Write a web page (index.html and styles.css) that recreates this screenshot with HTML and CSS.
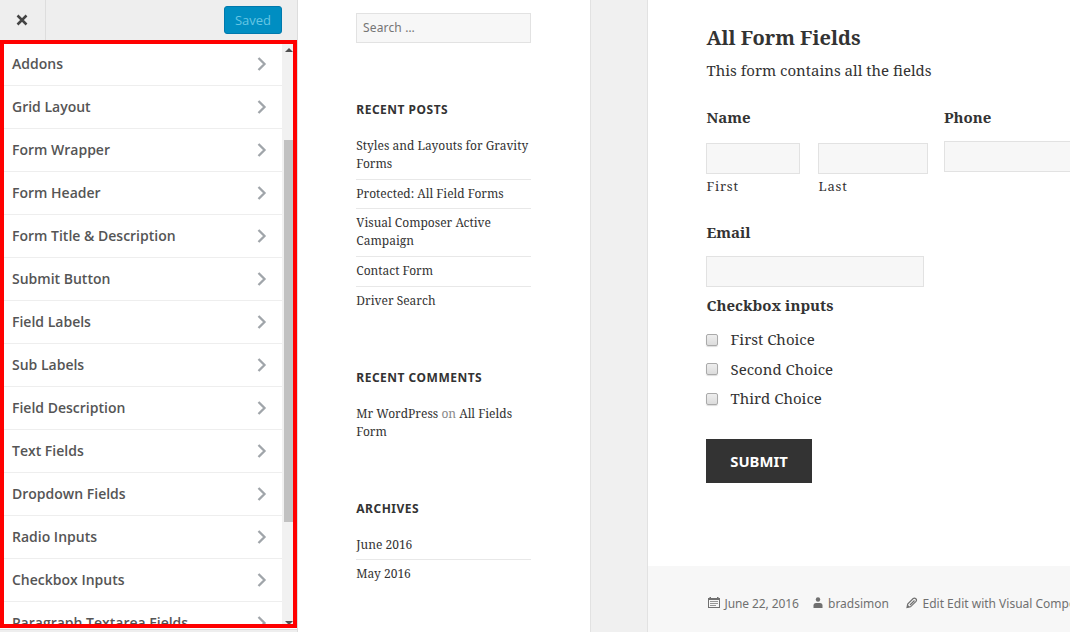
FILE: index.html
```html
<!DOCTYPE html>
<html lang="en">
<head>
<meta charset="utf-8">
<title>Customizer</title>
<link rel="stylesheet" href="styles.css">
</head>
<body>
<div class="app">
  <aside class="customizer">
    <header class="toolbar">
      <button class="close" aria-label="Close"><svg width="12" height="12" viewBox="0 0 12 12"><path d="M1.500 1.500l9 9M10.500 1.500l-9 9" stroke="#444" stroke-width="2.500" fill="none"/></svg></button>
      <button class="saved">Saved</button>
    </header>
    <div class="panel">
      <ul class="sections">
        <li>Addons<svg class="chev" viewBox="0 0 10 14"><path d="M1.500 1l6 6-6 6"/></svg></li>
        <li>Grid Layout<svg class="chev" viewBox="0 0 10 14"><path d="M1.500 1l6 6-6 6"/></svg></li>
        <li>Form Wrapper<svg class="chev" viewBox="0 0 10 14"><path d="M1.500 1l6 6-6 6"/></svg></li>
        <li>Form Header<svg class="chev" viewBox="0 0 10 14"><path d="M1.500 1l6 6-6 6"/></svg></li>
        <li>Form Title &amp; Description<svg class="chev" viewBox="0 0 10 14"><path d="M1.500 1l6 6-6 6"/></svg></li>
        <li>Submit Button<svg class="chev" viewBox="0 0 10 14"><path d="M1.500 1l6 6-6 6"/></svg></li>
        <li>Field Labels<svg class="chev" viewBox="0 0 10 14"><path d="M1.500 1l6 6-6 6"/></svg></li>
        <li>Sub Labels<svg class="chev" viewBox="0 0 10 14"><path d="M1.500 1l6 6-6 6"/></svg></li>
        <li>Field Description<svg class="chev" viewBox="0 0 10 14"><path d="M1.500 1l6 6-6 6"/></svg></li>
        <li>Text Fields<svg class="chev" viewBox="0 0 10 14"><path d="M1.500 1l6 6-6 6"/></svg></li>
        <li>Dropdown Fields<svg class="chev" viewBox="0 0 10 14"><path d="M1.500 1l6 6-6 6"/></svg></li>
        <li>Radio Inputs<svg class="chev" viewBox="0 0 10 14"><path d="M1.500 1l6 6-6 6"/></svg></li>
        <li>Checkbox Inputs<svg class="chev" viewBox="0 0 10 14"><path d="M1.500 1l6 6-6 6"/></svg></li>
        <li>Paragraph Textarea Fields<svg class="chev" viewBox="0 0 10 14"><path d="M1.500 1l6 6-6 6"/></svg></li>
      </ul>
      <div class="scrollbar">
        <svg class="arrow" viewBox="0 0 8 4"><path d="M0 4L4 0l4 4z"/></svg>
        <div class="thumb"></div>
        <svg class="arrow down" viewBox="0 0 8 4"><path d="M0 0l4 4 4-4z"/></svg>
      </div>
    </div>
    <div class="bottom"></div>
  </aside>

  <section class="sidebar">
    <input class="search" type="text" placeholder="Search …">
    <h2 class="widget-title">Recent Posts</h2>
    <ul class="links">
      <li>Styles and Layouts for Gravity<br>Forms</li>
      <li class="tight">Protected: All Field Forms</li>
      <li>Visual Composer Active<br>Campaign</li>
      <li>Contact Form</li>
      <li>Driver Search</li>
    </ul>
    <h2 class="widget-title">Recent Comments</h2>
    <ul class="links">
      <li>Mr WordPress <span class="muted">on</span> All Fields<br>Form</li>
    </ul>
    <h2 class="widget-title">Archives</h2>
    <ul class="links">
      <li class="tight">June 2016</li>
      <li>May 2016</li>
    </ul>
  </section>

  <main class="content">
    <div class="form">
      <h1 class="form-title">All Form Fields</h1>
      <p class="form-desc">This form contains all the fields</p>
      <div class="row">
        <div class="name-field">
          <div class="label">Name</div>
          <div class="name-inputs">
            <div class="first"><input class="input" type="text"><div class="sub">First</div></div>
            <div class="last"><input class="input" type="text"><div class="sub">Last</div></div>
          </div>
        </div>
        <div class="phone-field">
          <div class="label phone-label">Phone</div>
          <input class="input" type="text">
        </div>
      </div>
      <div class="email-field">
        <div class="label">Email</div>
        <input class="input" type="text">
      </div>
      <div class="label check-label">Checkbox inputs</div>
      <div class="choices">
        <div class="choice"><span class="box"></span><span>First Choice</span></div>
        <div class="choice"><span class="box"></span><span>Second Choice</span></div>
        <div class="choice"><span class="box"></span><span>Third Choice</span></div>
      </div>
      <button class="submit">SUBMIT</button>
    </div>
    <footer class="meta">
      <svg class="cal" width="12" height="12" viewBox="0 0 12 12"><path d="M0 1h1.500V0h1.500v1h6V0h1.500v1H12v10H0z" fill="#707070"/><path d="M1 3h10v7H1z" fill="#f7f7f7"/><path d="M2 4.500h8M2 6.500h8M2 8.500h6" stroke="#8a8a8a" stroke-width=".9"/></svg>
      <span class="date">June 22, 2016</span>
      <svg class="user" width="10" height="12" viewBox="0 0 10 12"><circle cx="5" cy="2.500" r="2.200" fill="#707070"/><path d="M.5 11V8.500Q.5 6 3 6h4q2.500 0 2.500 2.500V11z" fill="#707070"/></svg>
      <span class="author">bradsimon</span>
      <svg class="pen" width="12" height="12" viewBox="0 0 12 12"><path d="M1 10.500l.7-3.500 5.500-5.500q1.300-1 2.600.2t.2 2.600l-5.500 5.500zM4 8l4.500-4.500" fill="none" stroke="#707070" stroke-width="1.200"/><path d="M1 10.500l.5-3 2.500 2.500z" fill="#707070"/></svg>
      <span class="edit">Edit Edit with Visual Composer</span>
    </footer>
  </main>
</div>
</body>
</html>
```
FILE: styles.css
```css
* { box-sizing: border-box; }
body { margin: 0; width: 1070px; height: 632px; overflow: hidden; background: #f0f0f0; font-family: "Noto Serif", "Droid Serif", "DejaVu Serif Condensed", "DejaVu Serif", serif; color: #333; }
h1, h2, p, ul { margin: 0; padding: 0; list-style: none; }
button, input { font: inherit; padding: 0; margin: 0; }
.app { display: flex; height: 632px; }

.customizer { width: 298px; flex: none; background: #eee; border-right: 1px solid #ddd; display: flex; flex-direction: column; }
.toolbar { height: 40px; flex: none; display: flex; justify-content: space-between; align-items: center; }
.close { width: 46px; height: 40px; border: 0; border-right: 1px solid #ddd; background: #eee; display: flex; align-items: center; justify-content: center; padding-right: 2px; }
.saved { width: 58px; height: 28px; margin-right: 15px; border: 1px solid #0079ad; border-radius: 3px; background: #008ec2; color: #66c6e4; font: 13px/26px "Open Sans", sans-serif; }
.panel { height: 588px; flex: none; border: 4px solid #f00; display: flex; overflow: hidden; }
.sections { width: 278px; flex: none; background: #fff; }
.sections li { height: 43px; border-bottom: 1px solid #eee; padding: 0 15px 0 8px; display: flex; justify-content: space-between; align-items: center; color: #555; font: 600 14px/20px "Open Sans", sans-serif; }
.sections li:first-child { height: 42px; padding-bottom: 1px; }
.chev { width: 10px; height: 14px; fill: none; stroke: #a0a5aa; stroke-width: 2.300; }
.scrollbar { flex: 1; background: #f1f1f1; display: flex; flex-direction: column; align-items: flex-end; padding: 4px 0 0; }
.arrow { width: 8px; height: 4px; flex: none; fill: #505050; }
.thumb { width: 9px; height: 382px; flex: none; background: #c1c1c1; margin: 88px 0 99px; }
.bottom { flex: 1; border-top: 1px solid #fff; box-shadow: inset 0 1px #ddd; }

.sidebar { width: 293px; flex: none; background: #fff; border-right: 1px solid #e2e2e2; padding: 13px 59px 0 58px; }
.search { display: block; width: 175px; height: 30px; border: 1px solid #e2e2e2; background: #f7f7f7; padding: 0 6px 2px; font: 12px "Noto Sans", sans-serif; letter-spacing: .15px; }
.search::placeholder { color: #757575; opacity: 1; }
.widget-title { height: 18px; margin: 59px 0 18px; padding-left: .3px; font: 700 12px/18px "Noto Sans", sans-serif; letter-spacing: .5px; text-transform: uppercase; white-space: nowrap; }
.search + .widget-title { margin-top: 58px; }
.links { font-size: 12px; line-height: 18px; white-space: nowrap; }
.links li { padding: 5px 0 6px .3px; border-bottom: 1px solid #e8e8e8; }
.links li:first-child { padding-top: 0; }
.links li.tight { padding-bottom: 5px; }
.links li:last-child { border: 0; padding-bottom: 0; }
.muted { color: #888; }

.content { width: 423px; margin-left: 56px; flex: none; background: #fff; border-left: 1px solid #e2e2e2; overflow: hidden; display: flex; flex-direction: column; }
.form { height: 566px; flex: none; padding: 24px 0 0 58px; font-size: 15px; line-height: 24px; white-space: nowrap; }
.form-title { font-size: 20px; line-height: 28px; padding-left: .5px; }
.form-desc { margin-top: 6px; line-height: 24px; padding-left: .5px; }
.row { display: flex; gap: 16px; margin-top: 23px; height: 93px; }
.name-field { width: 222px; flex: none; }
.label { font-weight: 700; height: 24px; padding-left: .5px; }
.phone-label { padding-left: 0; }
.input { display: block; width: 100%; height: 31px; border: 1px solid #e2e2e2; background: #f7f7f7; }
.name-inputs { display: flex; gap: 18px; margin-top: 14px; }
.first { width: 94px; }
.last { width: 110px; }
.sub { font-size: 13px; line-height: 24px; letter-spacing: .8px; padding-left: .5px; }
.phone-field { width: 218px; flex: none; }
.phone-field .input { margin-top: 12px; }
.email-field { width: 218px; margin-top: 22px; }
.email-field .input { margin-top: 12px; }
.check-label { margin-top: 6px; }
.choices { margin-top: 10px; display: flex; flex-direction: column; gap: 5.500px; }
.choice { height: 24px; display: flex; align-items: center; gap: 12.500px; }
.box { width: 12px; height: 12px; margin-top: 1px; border: 1px solid #aaa; border-radius: 2px; background: linear-gradient(#eee, #dcdcdc); box-shadow: 0 1px 1px #ddd; }
.submit { display: block; width: 106px; height: 44px; margin-top: 29px; padding-top: 1px; border: 0; background: #333; color: #fff; font: 700 14.800px/43px "Noto Sans", sans-serif; }
.meta { flex: 1; background: #f7f7f7; padding: 28px 0 0 60px; display: flex; font: 12px/20px "Noto Sans", sans-serif; color: #707070; white-space: nowrap; }
.meta svg { flex: none; margin-top: 3px; }
.date { width: 88.500px; margin-left: 4.500px; flex: none; letter-spacing: -.1px; }
.author { width: 74px; margin-left: 5px; flex: none; }
.edit { margin-left: 4.500px; }
.pen { margin-left: 4px; }
```
